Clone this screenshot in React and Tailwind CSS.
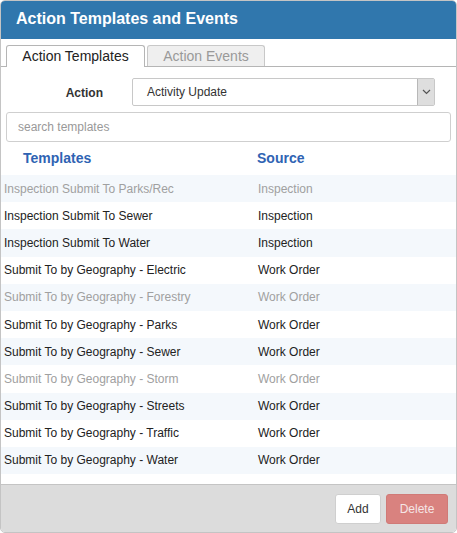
import React, { useState } from 'react';

const rows = [
  { name: 'Inspection Submit To Parks/Rec', source: 'Inspection', disabled: true },
  { name: 'Inspection Submit To Sewer', source: 'Inspection' },
  { name: 'Inspection Submit To Water', source: 'Inspection' },
  { name: 'Submit To by Geography - Electric', source: 'Work Order' },
  { name: 'Submit To by Geography - Forestry', source: 'Work Order', disabled: true },
  { name: 'Submit To by Geography - Parks', source: 'Work Order' },
  { name: 'Submit To by Geography - Sewer', source: 'Work Order' },
  { name: 'Submit To by Geography - Storm', source: 'Work Order', disabled: true },
  { name: 'Submit To by Geography - Streets', source: 'Work Order' },
  { name: 'Submit To by Geography - Traffic', source: 'Work Order' },
  { name: 'Submit To by Geography - Water', source: 'Work Order' },
];

const App = () => {
  const [search, setSearch] = useState('');

  return (
    <div className="w-[457px] h-[533px] font-['Liberation_Sans',Arial,sans-serif] text-[#333]">
      <div className="h-full flex flex-col border border-[#c4c4c4] rounded-[5px] overflow-hidden bg-white">
        {/* Header */}
        <div className="h-[38px] shrink-0 bg-[#3077ad] flex items-center px-[15px] pb-[3px]">
          <h1 className="text-white font-bold text-[16px]">Action Templates and Events</h1>
        </div>

        {/* Tabs */}
        <div className="mt-[6px] px-[5px] flex items-end gap-[2px] border-b border-[#b5b5b5] h-[22px]">
          <div className="h-[22px] w-[139px] border border-b-0 border-[#b5b5b5] rounded-t-[3px] bg-white -mb-px flex items-center justify-center text-[14px] text-[#222]">
            Action Templates
          </div>
          <div className="h-[21px] w-[118px] border border-b-0 border-[#c8c8c8] rounded-t-[3px] bg-[#efefef] flex items-center justify-center text-[14px] text-[#999]">
            Action Events
          </div>
        </div>

        {/* Action select */}
        <div className="flex items-center mt-[11px] h-[28px]">
          <div className="w-[131px] text-right pr-[29px] pt-[2px] text-[12px] font-bold text-[#333]">Action</div>
          <div className="w-[303px] h-[28px] border border-[#c8c8c8] rounded-[2px] flex items-stretch">
            <div className="flex-1 flex items-center pl-[14px] text-[12px] text-[#333]">Activity Update</div>
            <div className="w-[17px] bg-[#dedede] border-l border-[#b8b8b8] flex items-center justify-center">
              <svg width="9" height="6" viewBox="0 0 9 6">
                <path d="M1 1l3.5 3.5L8 1" fill="none" stroke="#555" strokeWidth="1.2" />
              </svg>
            </div>
          </div>
        </div>

        {/* Search */}
        <div className="px-[5px] mt-[6px]">
          <input
            value={search}
            onChange={(e) => setSearch(e.target.value)}
            placeholder="search templates"
            className="w-full h-[30px] border border-[#cfcfcf] rounded-[3px] px-[11px] text-[12px] placeholder:text-[#999] outline-none"
          />
        </div>

        {/* Table header */}
        <div className="flex h-[33px] items-center text-[14px] font-bold text-[#2f63b3]">
          <div className="w-[256px] pl-[22px]">Templates</div>
          <div>Source</div>
        </div>

        {/* Rows */}
        <div className="flex-1">
          {rows.map((r, i) => (
            <div
              key={r.name}
              className={`flex items-center h-[27.2px] text-[12px] ${i % 2 === 0 ? 'bg-[#f4f8fc]' : 'bg-white'} ${r.disabled ? 'text-[#a0a0a0]' : 'text-[#222]'}`}
            >
              <div className="w-[257px] pl-[3px]">{r.name}</div>
              <div>{r.source}</div>
            </div>
          ))}
        </div>

        {/* Footer */}
        <div className="h-[48px] shrink-0 bg-[#dcdcdc] border-t border-[#c4c4c4] flex items-center justify-end gap-[5px] pr-[8px]">
          <button className="h-[30px] w-[46px] bg-white border border-[#cfcfcf] rounded-[3px] text-[12px] text-[#333]">Add</button>
          <button className="h-[30px] w-[62px] bg-[#d9827f] border border-[#d07a77] rounded-[3px] text-[12px] text-[#f5e6e6]">Delete</button>
        </div>
      </div>
    </div>
  );
};

export default App;
